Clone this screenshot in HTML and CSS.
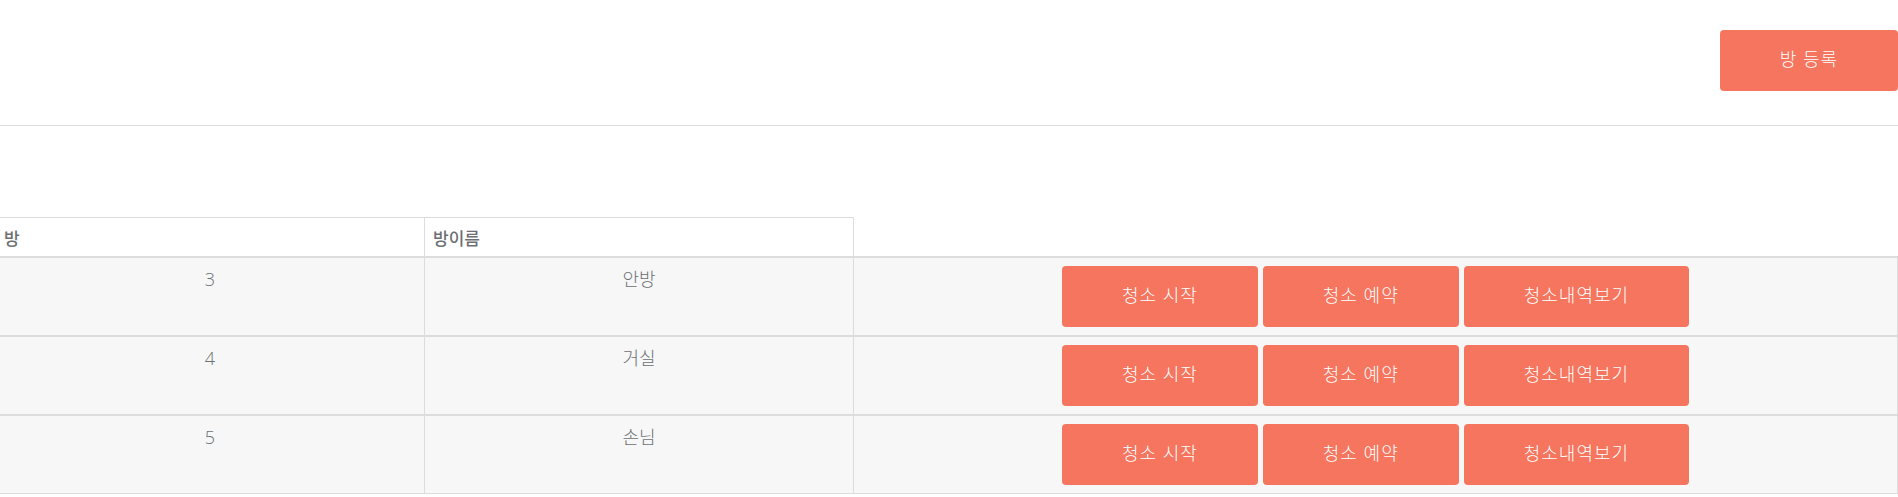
FILE: index.html
```html
<!DOCTYPE html>
<html lang="ko">
<head>
<meta charset="utf-8">
<title>방 목록</title>
<link rel="stylesheet" href="styles.css">
</head>
<body>
<header class="top"><button class="btn" type="button">방 등록</button></header>
<main class="content">
<table class="rooms">
<colgroup><col class="col-id"><col class="col-name"><col></colgroup>
<thead><tr><th scope="col">방</th><th scope="col">방이름</th><td class="blank"></td></tr></thead>
<tbody>
<tr><td>3</td><td>안방</td><td><div class="actions"><button class="btn" type="button">청소 시작</button><button class="btn" type="button">청소 예약</button><button class="btn" type="button">청소내역보기</button></div></td></tr>
<tr><td>4</td><td>거실</td><td><div class="actions"><button class="btn" type="button">청소 시작</button><button class="btn" type="button">청소 예약</button><button class="btn" type="button">청소내역보기</button></div></td></tr>
<tr><td>5</td><td>손님</td><td><div class="actions"><button class="btn" type="button">청소 시작</button><button class="btn" type="button">청소 예약</button><button class="btn" type="button">청소내역보기</button></div></td></tr>
</tbody>
</table>
</main>
</body>
</html>
```
FILE: styles.css
```css
* { box-sizing: border-box; }
body { margin: 0; background: #fff; color: #6c7074; font: 300 18px/26px "Open Sans", "Noto Sans CJK KR", sans-serif; }
.top { display: flex; justify-content: flex-end; padding: 30px 0 34px; border-bottom: 1px solid #ddd; }
.btn { height: 61px; padding: 0 60px 4px; border: 0; border-radius: 4px; background: #f6755e; color: #fff; font: inherit; letter-spacing: 1px; white-space: nowrap; }
.content { padding-top: 91px; }
.rooms { width: 100%; border-collapse: separate; border-spacing: 0; table-layout: fixed; }
.col-id { width: 425px; }
.col-name { width: 429px; }
th { height: 40px; padding: 2px 8px 0; border: 1px solid #dcdcdc; border-left: 0; text-align: left; font-family: "Noto Sans CJK KR", sans-serif; font-size: 17px; font-weight: 500; line-height: 24px; }
td { height: 79px; padding: 8px; border: 1px solid #dcdcdc; border-left: 0; background: #f7f7f7; text-align: center; vertical-align: top; }
th:first-child, td:first-child { padding-left: 4px; }
.blank { height: 40px; padding: 0; border-width: 0 0 1px; background: none; }
.actions { display: flex; justify-content: center; gap: 5px; }
```
